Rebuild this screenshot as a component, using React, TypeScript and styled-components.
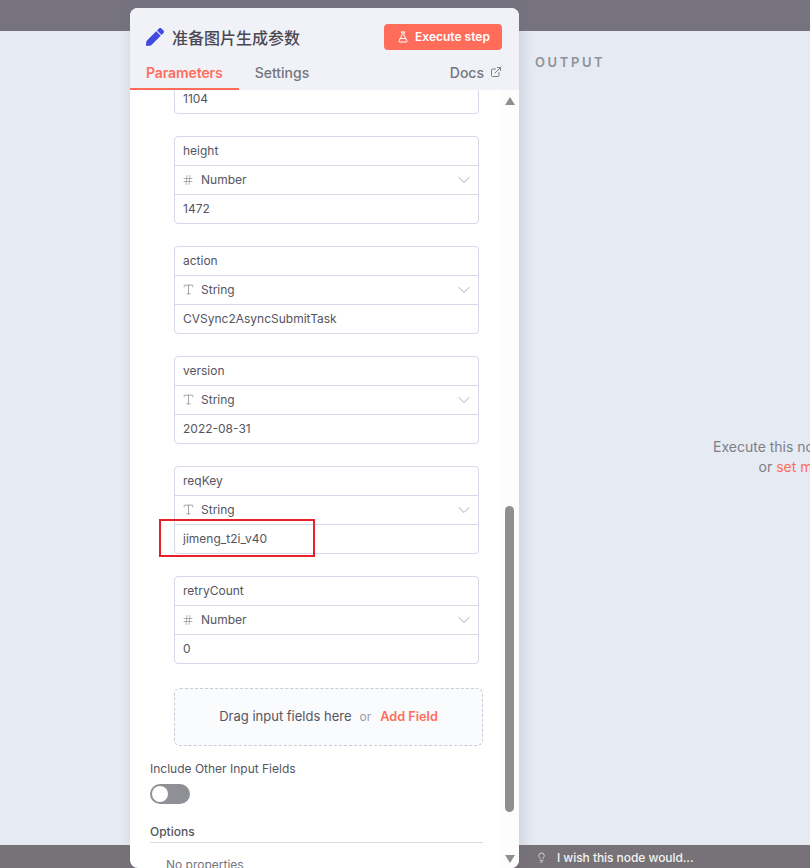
import React from 'react';
import styled, { createGlobalStyle } from 'styled-components';
import { FaPen } from 'react-icons/fa';
import { ChevronDown, ExternalLink, FlaskConical, Hash, Lightbulb, Type } from 'lucide-react';

const GlobalStyle = createGlobalStyle`
    html, body {
        margin: 0;
        height: 100%;
        overflow: hidden;
        background: #e6eaf3;
        font-family: Inter, "Liberation Sans", sans-serif;
    }
`;

const Page = styled.div`
    position: relative;
    width: 810px;
    height: 868px;
    overflow: hidden;
    display: grid;
    grid-template-rows: 31px 814px 23px;
`;

const TopBar = styled.div`
    background: #76737f;
`;

const Stage = styled.div`
    background: #e6eaf3;
    padding-left: 519px;
    overflow: hidden;
`;

const OutputPane = styled.section`
    width: 588px;
    height: 100%;
    box-sizing: border-box;
    padding: 23px 15px 0 17px;
    background: linear-gradient(90deg, #dde1ea 0, #e6eaf3 16px);
`;

const OutputTitle = styled.h2`
    margin: 0 0 0 -1px;
    font-size: 13px;
    line-height: 16px;
    font-weight: 600;
    letter-spacing: 2.6px;
    color: #90929a;
`;

const OutputHint = styled.p`
    margin: 367px 0 0;
    text-align: center;
    font-size: 14px;
    line-height: 20px;
    color: #7d7f88;
`;

const MockLink = styled.span`
    color: #ff6d5a;
`;

const BottomBar = styled.div`
    background: #767277;
    box-sizing: border-box;
    padding: 2px 0 0 536px;
    display: flex;
    align-items: center;
    gap: 10px;
    color: #f2f2f2;
    font-size: 12px;
    font-weight: 500;
    letter-spacing: -0.06px;
`;

const Panel = styled.div`
    position: absolute;
    left: 130px;
    top: 8px;
    width: 389px;
    height: 860px;
    box-sizing: border-box;
    display: flex;
    flex-direction: column;
    background: #fff;
    border-radius: 8px;
    overflow: hidden;
    box-shadow: 0 0 12px rgba(90, 95, 120, 0.16);
`;

const PanelHeader = styled.header`
    flex: none;
    height: 82px;
    background: #f0f2f8;
    display: flex;
    flex-direction: column;
`;

const TitleRow = styled.div`
    height: 52px;
    box-sizing: border-box;
    padding: 5px 17px 0 16px;
    display: flex;
    align-items: center;
    justify-content: space-between;
`;

const TitleGroup = styled.div`
    display: flex;
    align-items: center;
    gap: 8px;
    color: #3f4ae0;
`;

const Title = styled.h1`
    margin: 0;
    font-family: Inter, "Noto Sans CJK SC", sans-serif;
    font-size: 16px;
    font-weight: 500;
    color: #4a4a55;
`;

const ExecuteButton = styled.button`
    width: 118px;
    height: 26px;
    padding: 0 0 0 1px;
    border: none;
    border-radius: 4px;
    background: #ff6d5a;
    color: #fff;
    font-family: inherit;
    font-size: 12px;
    font-weight: 600;
    display: flex;
    align-items: center;
    justify-content: center;
    gap: 6px;
`;

const TabRow = styled.nav`
    flex: 1;
    display: flex;
    align-items: stretch;
    padding-right: 17px;
`;

const Tab = styled.div<{ $active?: boolean }>`
    box-sizing: border-box;
    height: 30px;
    padding: 0 16px 4px;
    display: flex;
    align-items: center;
    font-size: 14px;
    font-weight: ${(p) => (p.$active ? 600 : 500)};
    letter-spacing: ${(p) => (p.$active ? '-0.1px' : '0')};
    color: ${(p) => (p.$active ? '#ff6d5a' : '#74757f')};
    border-bottom: 2px solid ${(p) => (p.$active ? '#ff6d5a' : 'transparent')};
`;

const DocsLink = styled.div`
    margin-left: auto;
    height: 24px;
    display: flex;
    align-items: center;
    gap: 6px;
    font-size: 14px;
    font-weight: 500;
    color: #74757f;
`;

const PanelBody = styled.div`
    flex: 1;
    min-height: 0;
    display: flex;
`;

const Content = styled.div`
    flex: 1;
    min-width: 0;
    overflow: hidden;
    padding-left: 20px;
`;

const FieldList = styled.div`
    margin: -6px 0 0 24px;
    width: 305px;
    display: flex;
    flex-direction: column;
    gap: 22px;
`;

const FieldCard = styled.div`
    border: 1px solid #d5d9e8;
    border-radius: 4px;
    background: #fff;
`;

const FieldRow = styled.div`
    height: 28px;
    box-sizing: border-box;
    padding: 0 8px 1px;
    display: flex;
    align-items: center;
    font-size: 12px;
    color: #55555f;
    & + & {
        height: 29px;
        border-top: 1px solid #d5d9e8;
    }
`;

const TypeIcon = styled.span`
    width: 19px;
    margin-left: -1px;
    display: flex;
    align-items: center;
    color: #8f9098;
`;

const Chevron = styled.span`
    margin-left: auto;
    margin-right: -4px;
    display: flex;
    color: #a4a5ad;
`;

const DropZone = styled.div`
    margin: 24px 0 0 24px;
    width: 309px;
    height: 58px;
    box-sizing: border-box;
    padding-bottom: 2px;
    border: 1px dashed #c8ccd9;
    border-radius: 6px;
    background: #fafbfd;
    display: flex;
    align-items: center;
    justify-content: center;
    font-size: 13px;
    color: #55555f;
`;

const OrText = styled.span`
    margin: 0 9px 0 8px;
    font-size: 12px;
    color: #9a9ba3;
`;

const AddField = styled.span`
    font-weight: 600;
    font-size: 12.7px;
    color: #ff6d5a;
`;

const SwitchLabel = styled.div`
    margin-top: 15px;
    font-size: 12px;
    line-height: 16px;
    color: #55555f;
`;

const SwitchTrack = styled.div`
    margin-top: 7px;
    width: 40px;
    height: 20px;
    box-sizing: border-box;
    padding: 2px;
    border-radius: 10px;
    background: #8f9096;
`;

const SwitchKnob = styled.div`
    width: 16px;
    height: 16px;
    border-radius: 50%;
    background: #fff;
`;

const SectionTitle = styled.div`
    margin-top: 20px;
    width: 333px;
    box-sizing: border-box;
    height: 19px;
    border-bottom: 1px solid #d5dbe3;
    font-size: 12px;
    line-height: 16px;
    font-weight: 500;
    color: #55555f;
`;

const EmptyNote = styled.div`
    margin: 14px 0 0 16px;
    font-size: 12px;
    line-height: 16px;
    color: #74757f;
`;

const ScrollTrack = styled.div`
    flex: none;
    width: 18px;
    box-sizing: border-box;
    padding: 7px 1px 5px 0;
    background: #fdfdfd;
    display: flex;
    flex-direction: column;
    align-items: center;
`;

const ScrollThumb = styled.div`
    margin-top: auto;
    margin-bottom: 43px;
    width: 9px;
    height: 306px;
    border-radius: 5px;
    background: #8f8f8f;
`;

const Annotation = styled.div`
    position: absolute;
    left: 159px;
    top: 519px;
    width: 156px;
    height: 38px;
    box-sizing: border-box;
    border: 2px solid #e8202a;
`;

type Field = { name: string; type: 'Number' | 'String'; value: string };

const fields: Field[] = [
    { name: 'height', type: 'Number', value: '1472' },
    { name: 'action', type: 'String', value: 'CVSync2AsyncSubmitTask' },
    { name: 'version', type: 'String', value: '2022-08-31' },
    { name: 'reqKey', type: 'String', value: 'jimeng_t2i_v40' },
    { name: 'retryCount', type: 'Number', value: '0' },
];

const ArrowGlyph = ({ down }: { down?: boolean }) => (
    <svg width="10" height="8" viewBox="0 0 10 8">
        <path d={down ? 'M0 0h10L5 8z' : 'M5 0L10 8H0z'} fill="#8f8f8f" />
    </svg>
);

const App = () => (
    <Page>
        <GlobalStyle />
        <TopBar />
        <Stage>
            <OutputPane>
                <OutputTitle>OUTPUT</OutputTitle>
                <OutputHint>
                    Execute this node to view data
                    <br />
                    or <MockLink>set mock data</MockLink>
                </OutputHint>
            </OutputPane>
        </Stage>
        <BottomBar>
            <Lightbulb size={11} strokeWidth={1.6} />
            I wish this node would...
        </BottomBar>

        <Panel>
            <PanelHeader>
                <TitleRow>
                    <TitleGroup>
                        <FaPen size={18} />
                        <Title>准备图片生成参数</Title>
                    </TitleGroup>
                    <ExecuteButton>
                        <FlaskConical size={12} strokeWidth={2} />
                        Execute step
                    </ExecuteButton>
                </TitleRow>
                <TabRow>
                    <Tab $active>Parameters</Tab>
                    <Tab>Settings</Tab>
                    <DocsLink>
                        Docs
                        <ExternalLink size={12} strokeWidth={1.8} />
                    </DocsLink>
                </TabRow>
            </PanelHeader>
            <PanelBody>
                <Content>
                    <FieldList>
                        <FieldCard>
                            <FieldRow>1104</FieldRow>
                        </FieldCard>
                        {fields.map((field) => (
                            <FieldCard key={field.name}>
                                <FieldRow>{field.name}</FieldRow>
                                <FieldRow>
                                    <TypeIcon>
                                        {field.type === 'Number' ? (
                                            <Hash size={12} strokeWidth={1.4} />
                                        ) : (
                                            <Type size={13} strokeWidth={1.5} />
                                        )}
                                    </TypeIcon>
                                    {field.type}
                                    <Chevron>
                                        <ChevronDown size={20} strokeWidth={1.1} />
                                    </Chevron>
                                </FieldRow>
                                <FieldRow>{field.value}</FieldRow>
                            </FieldCard>
                        ))}
                    </FieldList>
                    <DropZone>
                        Drag input fields here
                        <OrText>or</OrText>
                        <AddField>Add Field</AddField>
                    </DropZone>
                    <SwitchLabel>Include Other Input Fields</SwitchLabel>
                    <SwitchTrack>
                        <SwitchKnob />
                    </SwitchTrack>
                    <SectionTitle>Options</SectionTitle>
                    <EmptyNote>No properties</EmptyNote>
                </Content>
                <ScrollTrack>
                    <ArrowGlyph />
                    <ScrollThumb />
                    <ArrowGlyph down />
                </ScrollTrack>
            </PanelBody>
        </Panel>

        <Annotation />
    </Page>
);

export default App;
